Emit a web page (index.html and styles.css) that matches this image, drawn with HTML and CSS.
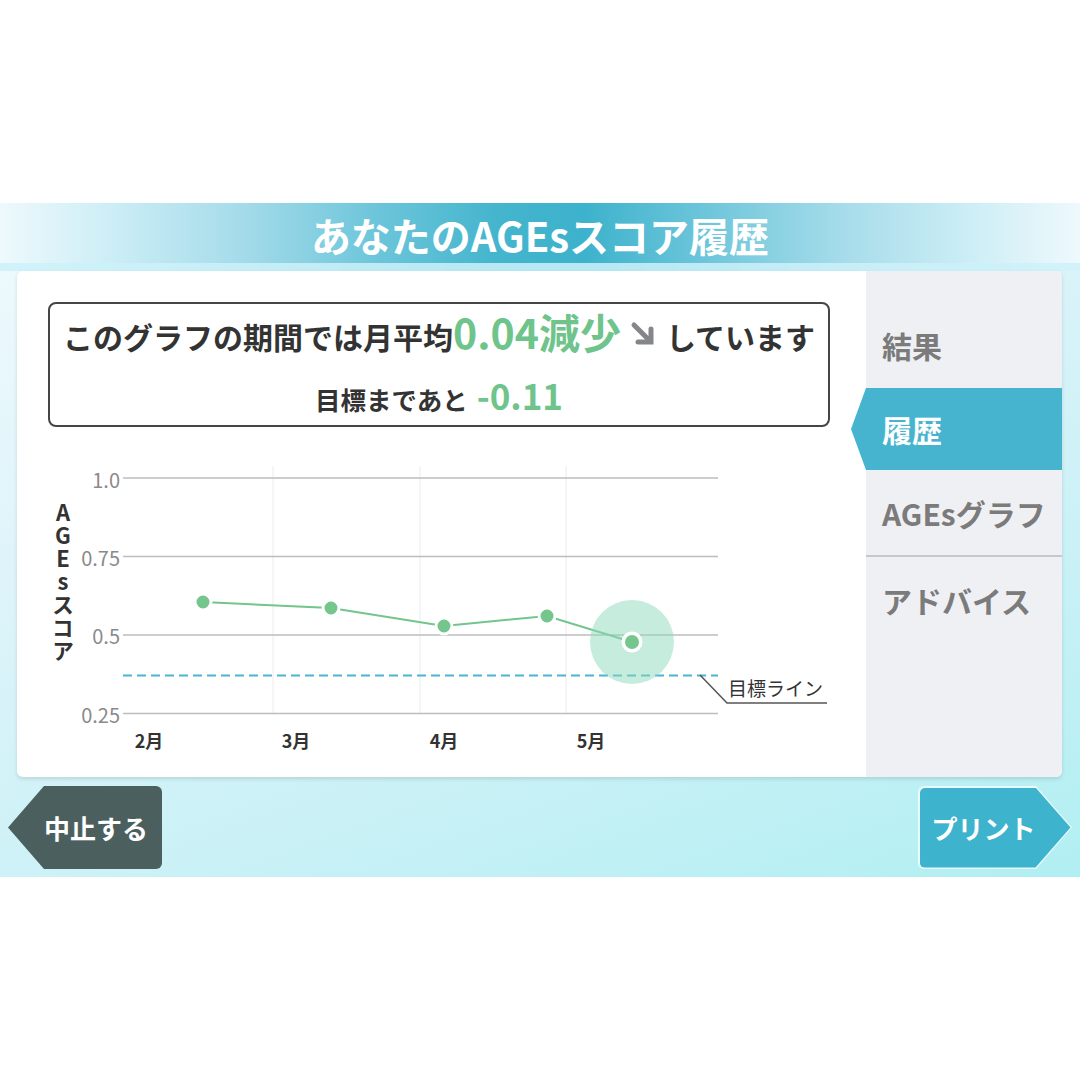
FILE: index.html
```html
<!DOCTYPE html>
<html lang="ja">
<head>
<meta charset="utf-8">
<title>あなたのAGEsスコア履歴</title>
<link rel="stylesheet" href="styles.css">
</head>
<body>
<div class="app">
  <header class="title-band"><h1>あなたのAGEsスコア履歴</h1></header>
  <div class="card">
    <main class="main">
      <div class="summary">
        <p class="line1">このグラフの期間では月平均<span class="big">0.04減少</span><svg class="arrow" viewBox="0 0 26 26" width="26" height="26"><path d="M4 4 L20 20" /><path d="M21 8 L21 21 L8 21" /></svg>しています</p>
        <p class="line2">目標まであと<span class="big2">-0.11</span></p>
      </div>
      <div class="chart">
        <div class="axis-title">AGEsスコア</div>
        <svg class="plot" viewBox="80 427 786 350" width="786" height="350">
          <line class="vgrid" x1="273" y1="466" x2="273" y2="713" />
          <line class="vgrid" x1="420" y1="466" x2="420" y2="713" />
          <line class="vgrid" x1="566" y1="466" x2="566" y2="713" />
          <line class="hgrid" x1="123" y1="478" x2="718" y2="478" />
          <line class="hgrid" x1="123" y1="556.5" x2="718" y2="556.5" />
          <line class="hgrid" x1="123" y1="635" x2="718" y2="635" />
          <line class="hgrid" x1="123" y1="713.5" x2="718" y2="713.5" />
          <text class="ylab" x="120" y="479">1.0</text>
          <text class="ylab" x="120" y="557">0.75</text>
          <text class="ylab" x="120" y="635">0.5</text>
          <text class="ylab" x="120" y="714">0.25</text>
          <text class="xlab" x="149" y="740">2月</text>
          <text class="xlab" x="296" y="740">3月</text>
          <text class="xlab" x="444" y="740">4月</text>
          <text class="xlab" x="591" y="740">5月</text>
          <line class="target" x1="123" y1="675.5" x2="718" y2="675.5" />
          <polyline class="callout" points="700,675 727,703 827,703" />
          <text class="tlab" x="728" y="687">目標ライン</text>
          <polyline class="series" points="203,602 331,608 444,626 547,616 632,642" />
          <circle class="halo" cx="632" cy="642" r="42" />
          <circle class="pt" cx="203" cy="602" r="8" />
          <circle class="pt" cx="331" cy="608" r="8" />
          <circle class="pt" cx="444" cy="626" r="8" />
          <circle class="pt" cx="547" cy="616" r="8" />
          <circle class="ring" cx="632" cy="642" r="10.5" />
          <circle class="cur" cx="632" cy="642" r="7" />
        </svg>
      </div>
    </main>
    <nav class="side">
      <div class="tab">結果</div>
      <div class="tab active">履歴</div>
      <div class="tab sep">AGEsグラフ</div>
      <div class="tab">アドバイス</div>
    </nav>
  </div>
  <footer class="actions">
    <div class="btn stop">中止する</div>
    <div class="btn print"><span class="print-inner">プリント</span></div>
  </footer>
</div>
</body>
</html>
```
FILE: styles.css
```css
html, body {
  margin: 0;
  padding: 0;
  background: #fff;
}
body {
  width: 1080px;
  height: 1080px;
  overflow: hidden;
  font-family: "Noto Sans CJK JP", "Noto Sans", sans-serif;
}
.app {
  margin-top: 203px;
  height: 674px;
  display: flex;
  flex-direction: column;
  background: linear-gradient(160deg, #f0fafd 0%, #def4fa 35%, #c9f1f6 70%, #b1eff2 100%);
}
.title-band {
  height: 60px;
  display: flex;
  align-items: center;
  justify-content: center;
  background: linear-gradient(90deg, #eef9fc 0%, #cdeef6 10%, #a6dcea 22%, #6cc5da 35%, #44b5cd 46%, #3db2cc 54%, #6cc5da 65%, #a6dcea 78%, #cdeef6 90%, #eef9fc 100%);
  border-bottom: 8px solid rgba(205, 241, 249, 0.85);
}
.title-band h1 {
  margin: 0;
  font-size: 40px;
  line-height: 1;
  font-weight: 700;
  color: #fff;
  padding-top: 4px;
}
.card {
  margin: 0 18px 0 17px;
  height: 506px;
  display: flex;
  background: #fff;
  border-radius: 6px;
  box-shadow: 0 2px 4px rgba(0, 0, 0, 0.12);
}
.main {
  width: 849px;
  padding-top: 31px;
  box-sizing: border-box;
}
.summary {
  margin-left: 31px;
  width: 782px;
  height: 125px;
  box-sizing: border-box;
  border: 2px solid #454545;
  border-radius: 8px;
  display: flex;
  flex-direction: column;
  align-items: center;
  color: #333;
  font-weight: 700;
}
.summary .line1,
.summary .line2 {
  display: flex;
  align-items: baseline;
}
.summary .line1 {
  margin: 5px 0 0 0;
  font-size: 30px;
  line-height: 44px;
  height: 44px;
}
.line1 .big {
  font-size: 41px;
  color: #6ec48b;
}
.arrow {
  margin: 0 10px 0 9px;
  align-self: center;
  position: relative;
  top: 3px;
}
.arrow path {
  fill: none;
  stroke: #85868a;
  stroke-width: 5;
  stroke-linecap: round;
  stroke-linejoin: miter;
}
.summary .line2 {
  margin: 22px 0 0 0;
  font-size: 25.5px;
  line-height: 40px;
  height: 40px;
}
.line2 .big2 {
  margin-left: 9px;
  font-size: 35px;
  color: #6ec48b;
}
.chart {
  display: flex;
  height: 350px;
}
.axis-title {
  margin-left: 35px;
  margin-right: 6px;
  margin-top: 75px;
  width: 22px;
  writing-mode: vertical-rl;
  text-orientation: upright;
  font-size: 22px;
  line-height: 1;
  letter-spacing: 1px;
  font-weight: 700;
  color: #333;
}
.plot {
  display: block;
}
.plot text {
  font-family: "Noto Sans CJK JP", "Noto Sans", sans-serif;
  dominant-baseline: central;
}
.vgrid {
  stroke: #ececec;
  stroke-width: 1;
}
.hgrid {
  stroke: #bdbdbd;
  stroke-width: 1.5;
}
.ylab {
  font-size: 20px;
  fill: #8a8a8a;
  text-anchor: end;
}
.xlab {
  font-size: 18px;
  font-weight: 700;
  fill: #333;
  text-anchor: middle;
}
.target {
  stroke: #4bb5cf;
  stroke-width: 2;
  stroke-dasharray: 9 5;
}
.callout {
  fill: none;
  stroke: #555;
  stroke-width: 1.5;
}
.tlab {
  font-size: 19px;
  fill: #333;
}
.series {
  fill: none;
  stroke: #72c58b;
  stroke-width: 2;
}
.halo {
  fill: rgba(140, 218, 185, 0.5);
}
.pt {
  fill: #74c68c;
  stroke: #fff;
  stroke-width: 3;
}
.ring {
  fill: #fff;
}
.cur {
  fill: #74c68c;
}
.side {
  width: 196px;
  padding-top: 31px;
  box-sizing: border-box;
  background: #eff0f4;
  border-radius: 0 6px 6px 0;
}
.tab {
  height: 86px;
  display: flex;
  align-items: center;
  padding-left: 16px;
  font-size: 30px;
  font-weight: 700;
  color: #7b7b7b;
  box-sizing: border-box;
}
.tab.active {
  height: 82px;
  margin-left: -15px;
  padding-left: 31px;
  color: #fff;
  background: #46b4cf;
  clip-path: polygon(15px 0, 100% 0, 100% 100%, 15px 100%, 0 50%);
}
.tab.sep {
  height: 87px;
  border-bottom: 2px solid #c6c7ca;
}
.actions {
  display: flex;
  justify-content: space-between;
  padding: 9px 8px 0 8px;
}
.btn {
  width: 154px;
  height: 83px;
  box-sizing: border-box;
  display: flex;
  align-items: center;
  font-size: 26px;
  font-weight: 700;
  color: #fff;
  border-radius: 6px;
}
.stop {
  padding-left: 36px;
  background: #4b5f5f;
  clip-path: polygon(36px 0, 100% 0, 100% 100%, 36px 100%, 0 50%);
}
.print {
  padding: 1.5px;
  background: #e9fbfd;
  clip-path: polygon(0 0, calc(100% - 36px) 0, 100% 50%, calc(100% - 36px) 100%, 0 100%);
}
.print-inner {
  flex: 1;
  height: 100%;
  display: flex;
  align-items: center;
  padding-left: 12px;
  background: #3db3cd;
  border-radius: 5px;
  clip-path: polygon(0 0, calc(100% - 35px) 0, 100% 50%, calc(100% - 35px) 100%, 0 100%);
}
```
